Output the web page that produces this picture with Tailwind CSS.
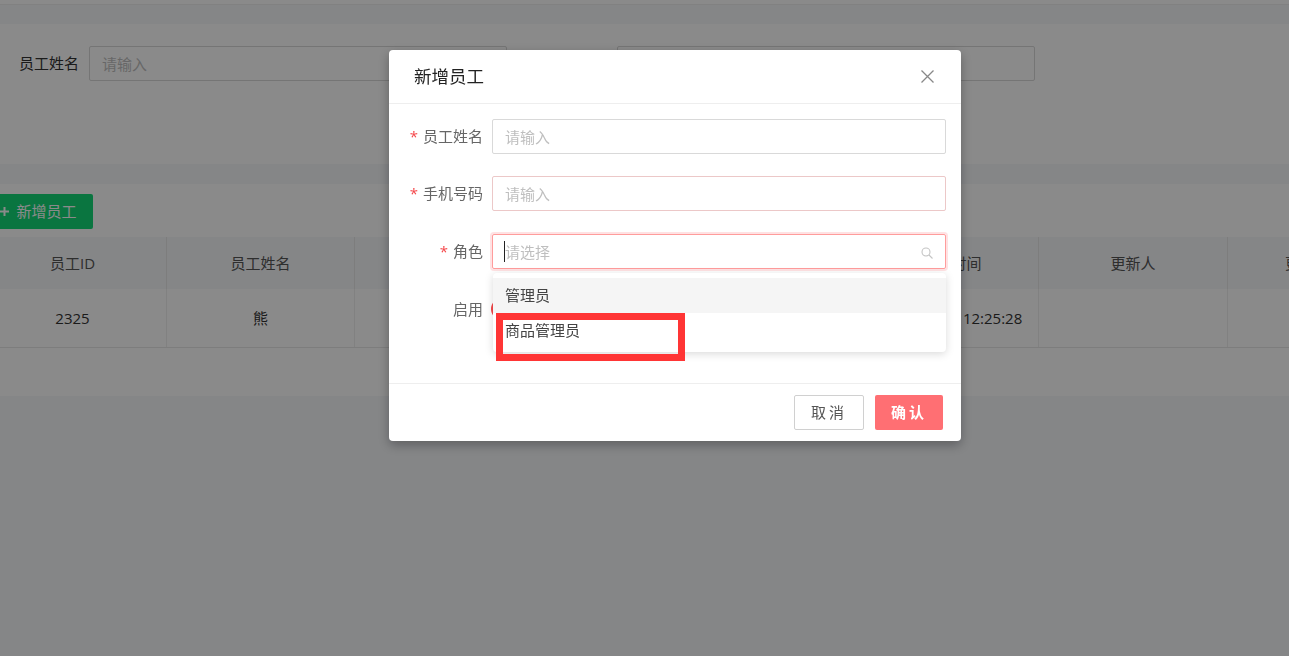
<!DOCTYPE html>
<html lang="zh-CN">
<head>
    <meta charset="UTF-8">
    <meta name="viewport" content="width=device-width, initial-scale=1.0">
    <title>新增员工</title>
    <script src="https://cdn.jsdelivr.net/npm/@tailwindcss/browser@4"></script>
</head>
<body class="h-screen overflow-hidden bg-[#f5f7fa] font-['Open_Sans','Noto_Sans_CJK_SC',sans-serif] text-[15px] text-[#333]">

    <!-- page behind the dialog -->
    <div class="h-[5px] bg-white border-b border-[#eee]"></div>

    <div class="mt-[19px] h-[140px] bg-white pt-[22px] pl-[19px] flex items-start">
        <label class="w-[70px] h-[35px] leading-[35px] shrink-0">员工姓名</label>
        <input type="text" placeholder="请输入" class="w-[418px] h-[35px] px-3 border border-[#d9d9d9] rounded-[2px] placeholder:text-[#bfbfbf]">
        <label class="w-[110px] h-[35px] leading-[35px] shrink-0 pl-5">手机号码</label>
        <input type="text" class="w-[418px] h-[35px] px-3 border border-[#d9d9d9] rounded-[2px]">
    </div>

    <div class="mt-5 h-[212px] bg-white pt-[10px] overflow-hidden">
        <button class="-ml-[16px] w-[109px] h-[35px] bg-[#13d977] rounded-[2px] text-white flex items-center justify-center gap-[7px]">
            <svg width="9" height="9" viewBox="0 0 9 9" class="shrink-0"><path d="M4.5 0v9M0 4.5h9" stroke="#fff" stroke-width="2"/></svg>
            新增员工
        </button>

        <div class="mt-2 -ml-[21px] flex w-max h-[52px] bg-[#f5f7fa] text-center leading-[52px] text-[#555]">
            <div class="w-[188px] border-r border-[#e8e8e8]">员工ID</div>
            <div class="w-[188px] border-r border-[#e8e8e8]">员工姓名</div>
            <div class="w-[510px] border-r border-[#e8e8e8]"></div>
            <div class="w-[174px] border-r border-[#e8e8e8]">创建时间</div>
            <div class="w-[189px] border-r border-[#e8e8e8]">更新人</div>
            <div class="w-[174px]">更新时间</div>
        </div>
        <div class="-ml-[21px] flex w-max h-[59px] border-b border-[#e8e8e8] text-center leading-[58px]">
            <div class="w-[188px] border-r border-[#eee]">2325</div>
            <div class="w-[188px] border-r border-[#eee]">熊</div>
            <div class="w-[510px] border-r border-[#eee]"></div>
            <div class="w-[174px] border-r border-[#eee] whitespace-nowrap">2023-02-08 12:25:28</div>
            <div class="w-[189px] border-r border-[#eee]"></div>
            <div class="w-[174px]"></div>
        </div>
    </div>

    <!-- dialog overlay -->
    <div class="fixed inset-0 bg-black/46">
        <div class="absolute left-[389px] top-[50px] w-[572px] h-[391px] bg-white rounded-[4px] shadow-[0_4px_12px_rgba(0,0,0,0.3)]">
            <div class="h-[54px] border-b border-[#eee] flex items-center justify-between pl-[25px] pr-[27px]">
                <h2 class="text-[17.5px] text-[#222]">新增员工</h2>
                <svg width="13" height="13" viewBox="0 0 13 13"><path d="M.5.5l12 12M12.5.5l-12 12" stroke="#888" stroke-width="1.3" fill="none"/></svg>
            </div>

            <div class="h-[279px] pt-[15px] pr-[15px] text-[#666]">
                <div class="flex items-center h-[35px]">
                    <label class="w-[103px] pr-[9px] flex justify-end gap-[5px]"><span class="text-[#f5474a]">*</span>员工姓名</label>
                    <input type="text" placeholder="请输入" class="flex-1 h-[35px] px-3 border border-[#d9d9d9] rounded-[2px] placeholder:text-[#bfbfbf]">
                </div>
                <div class="flex items-center h-[35px] mt-[22px]">
                    <label class="w-[103px] pr-[9px] flex justify-end gap-[5px]"><span class="text-[#f5474a]">*</span>手机号码</label>
                    <input type="text" placeholder="请输入" class="flex-1 h-[35px] px-3 border border-[#ecc8c8] rounded-[2px] placeholder:text-[#bfbfbf]">
                </div>
                <div class="flex items-center h-[35px] mt-[23px]">
                    <label class="w-[103px] pr-[9px] flex justify-end gap-[5px]"><span class="text-[#f5474a]">*</span>角色</label>
                    <div class="relative flex-1">
                        <input type="text" placeholder="请选择" class="w-full h-[35px] px-3 border border-[#ff9c9c] rounded-[2px] shadow-[0_0_0_2px_rgba(255,110,115,0.2)] placeholder:text-[#bfbfbf]">
                        <span class="absolute left-[12px] top-[7px] w-px h-[21px] bg-[#222]"></span>
                        <svg class="absolute right-[13px] top-[13px]" width="12" height="12" viewBox="0 0 12 12"><circle cx="5" cy="5" r="4" stroke="#c4c4c4" stroke-width="1.1" fill="none"/><path d="M8 8l3.5 3.5" stroke="#c4c4c4" stroke-width="1.1"/></svg>

                        <div class="absolute left-[1px] right-0 top-[39px] h-[79px] bg-white rounded-[4px] shadow-[0_2px_8px_rgba(0,0,0,0.15)] pt-[5px] text-[#444] z-10">
                            <div class="h-[35px] leading-[35px] px-3 bg-[#f5f5f5]">管理员</div>
                            <div class="h-[35px] leading-[35px] px-3">商品管理员</div>
                        </div>
                    </div>
                </div>
                <div class="flex items-center h-[22px] mt-[29px]">
                    <label class="w-[103px] pr-[9px] flex justify-end">启用</label>
                    <span class="w-11 h-[22px] rounded-full bg-[#f5474a] -ml-px"></span>
                </div>
            </div>

            <div class="h-[58px] border-t border-[#eee] flex justify-end gap-[11px] pt-[11px] pr-[18px]">
                <button class="w-[70px] h-[35px] border border-[#d0d0d0] rounded-[2px] text-[#555] tracking-[3px]">取消</button>
                <button class="w-[68px] h-[35px] bg-[#ff6f73] rounded-[2px] text-white font-semibold tracking-[3px]">确认</button>
            </div>

            <!-- red annotation box drawn on the screenshot -->
            <div class="absolute left-[107px] top-[263px] w-[189px] h-[48px] border-[7px] border-[#ff3535] z-20"></div>
        </div>
    </div>

</body>
</html>
